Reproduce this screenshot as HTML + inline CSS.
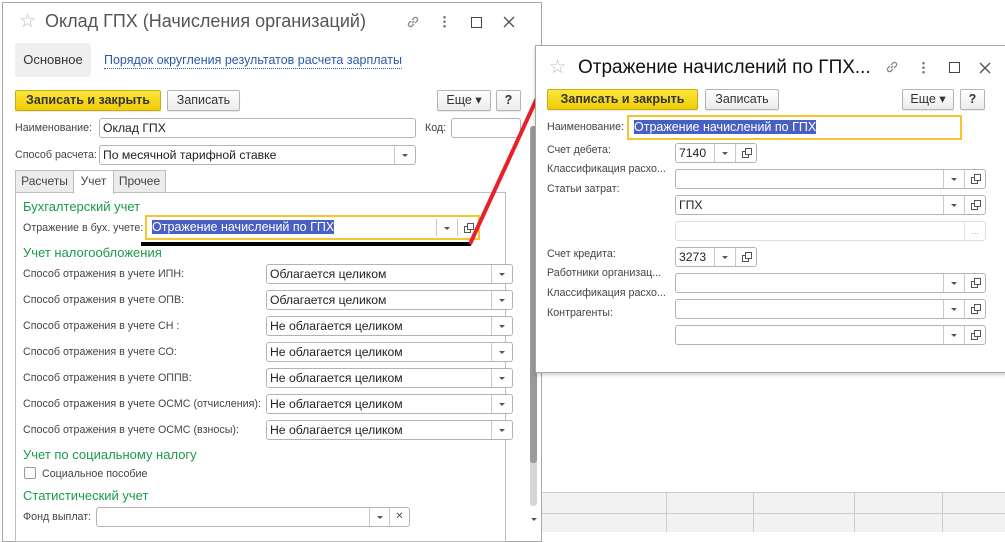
<!DOCTYPE html>
<html><head><meta charset="utf-8"><style>
*{box-sizing:border-box;margin:0;padding:0}
body{width:1005px;height:532px;overflow:hidden;background:#fff;font-family:"Liberation Sans",Arial,sans-serif;position:relative;color:#333}
.a{position:absolute}
.lbl{position:absolute;font-size:10.7px;color:#444;white-space:nowrap}
.grn{position:absolute;font-size:13px;color:#1a9a4a;white-space:nowrap}
.inp{position:absolute;border:1px solid #b3b3b3;border-radius:3px;background:#fff;height:20px;font-size:12.2px;color:#222;line-height:18px;padding-left:3px;white-space:nowrap;overflow:hidden}
.dd{position:absolute;top:0;bottom:0;width:21px;border-left:1px solid #c8c8c8}
.dd:after{content:"";position:absolute;left:7px;top:8px;border-left:3px solid transparent;border-right:3px solid transparent;border-top:3px solid #555}
.op{position:absolute;top:0;bottom:0;width:21px;border-left:1px solid #c8c8c8}
.op:before{content:"";position:absolute;left:6px;top:7px;width:5px;height:5px;border:1px solid #555;background:#fff}
.op:after{content:"";position:absolute;left:9px;top:4px;width:5px;height:5px;border:1px solid #555;background:#fff}
.btn{position:absolute;height:21px;border:1px solid #b5b5b5;border-radius:2px;background:linear-gradient(#fff,#ececec);font-size:12.5px;color:#333;text-align:center;line-height:19px;box-shadow:0 1px 1px rgba(0,0,0,.1)}
.yb{background:linear-gradient(#fbe63a,#efcd06);border-color:#c9ac12;font-weight:bold;color:#333}
.sel{background:#4a5fc4;color:#fff}
.yel{border:2px solid #f6c42c;border-radius:0}
.tab{position:absolute;top:170px;height:23px;border:1px solid #bdbdbd;border-bottom:none;background:#ececec;font-size:12px;line-height:21px;text-align:center;color:#444}
.ti{position:absolute;font-size:19px;color:#999}
</style></head><body>

<div class="a" style="left:541px;top:492px;width:464px;height:40px;background:#f2f2f2;border-top:1px solid #ccc"></div>
<div class="a" style="left:541px;top:513px;width:464px;height:1px;background:#ccc"></div>
<div class="a" style="left:666px;top:492px;width:1px;height:40px;background:#ccc"></div>
<div class="a" style="left:753px;top:492px;width:1px;height:40px;background:#ccc"></div>
<div class="a" style="left:854px;top:492px;width:1px;height:40px;background:#ccc"></div>
<div class="a" style="left:942px;top:492px;width:1px;height:40px;background:#ccc"></div>

<div class="a" style="left:2px;top:2px;width:540px;height:540px;border:1px solid #a8a8a8;background:#fff"></div>
<div class="ti" style="left:19px;top:10px;color:#bbb;font-size:19px">☆</div>
<div class="a" style="left:45px;top:11px;font-size:18px;color:#555">Оклад ГПХ (Начисления организаций)</div>
<svg class="a" style="left:405px;top:14px" width="16" height="16" viewBox="0 0 16 16" fill="none" stroke="#888" stroke-width="1.3"><path d="M7 9l2-2M6 7l-2 2a2 2 0 0 0 3 3l2-2M10 9l2-2a2 2 0 0 0-3-3L7 6"/></svg>
<div class="a" style="left:443px;top:15px;width:3px;height:13px;background:radial-gradient(circle,#777 1.2px,transparent 1.4px) 0 0/3px 4.5px"></div>
<div class="a" style="left:471px;top:17px;width:11px;height:11px;border:1.5px solid #444"></div>
<svg class="a" style="left:503px;top:16px" width="12" height="12"><path d="M1 1L11 11M11 1L1 11" stroke="#555" stroke-width="1.4"/></svg>

<div class="a" style="left:15px;top:43px;width:76px;height:34px;background:#efefef;border-radius:3px;font-size:13px;line-height:34px;text-align:center;color:#333">Основное</div>
<div class="a" style="left:104px;top:53px;font-size:12.5px;color:#2a59a8;border-bottom:1px dotted #2a59a8;line-height:15px">Порядок округления результатов расчета зарплаты</div>

<div class="btn yb" style="left:15px;top:90px;width:146px">Записать и закрыть</div>
<div class="btn" style="left:167px;top:90px;width:73px">Записать</div>
<div class="btn" style="left:437px;top:90px;width:54px">Еще ▾</div>
<div class="btn" style="left:496px;top:90px;width:25px;font-weight:bold">?</div>

<div class="lbl" style="left:15px;top:122px">Наименование:</div>
<div class="inp" style="left:99px;top:118px;width:317px">Оклад ГПХ</div>
<div class="lbl" style="left:425px;top:122px">Код:</div>
<div class="inp" style="left:451px;top:118px;width:70px"></div>
<div class="lbl" style="left:15px;top:149px">Способ расчета:</div>
<div class="inp" style="left:99px;top:145px;width:317px">По месячной тарифной ставке<div class="dd" style="right:0"></div></div>

<div class="tab" style="left:15px;width:59px">Расчеты</div>
<div class="tab" style="left:73px;width:41px;background:#fff;height:24px;z-index:2">Учет</div>
<div class="tab" style="left:113px;width:53px">Прочее</div>
<div class="a" style="left:15px;top:192px;width:491px;height:350px;border:1px solid #bdbdbd"></div>

<div class="grn" style="left:23px;top:199px">Бухгалтерский учет</div>
<div class="lbl" style="left:23px;top:222px">Отражение в бух. учете:</div>
<div class="inp yel" style="left:145px;top:215px;width:335px;height:25px;line-height:21px;padding-left:5px;font-size:12.5px"><span class="sel">Отражение начислений по ГПХ</span><div class="dd" style="right:21px;top:2px;bottom:2px"></div><div class="op" style="right:0;top:2px;bottom:2px"></div></div>
<div class="a" style="left:141px;top:242px;width:330px;height:4px;background:#000"></div>
<div class="grn" style="left:23px;top:245px">Учет налогообложения</div>

<div class="lbl" style="left:23px;top:268px">Способ отражения в учете ИПН:</div>
<div class="inp" style="left:266px;top:264px;width:247px">Облагается целиком<div class="dd" style="right:0"></div></div>
<div class="lbl" style="left:23px;top:294px">Способ отражения в учете ОПВ:</div>
<div class="inp" style="left:266px;top:290px;width:247px">Облагается целиком<div class="dd" style="right:0"></div></div>
<div class="lbl" style="left:23px;top:320px">Способ отражения в учете СН :</div>
<div class="inp" style="left:266px;top:316px;width:247px">Не облагается целиком<div class="dd" style="right:0"></div></div>
<div class="lbl" style="left:23px;top:346px">Способ отражения в учете СО:</div>
<div class="inp" style="left:266px;top:342px;width:247px">Не облагается целиком<div class="dd" style="right:0"></div></div>
<div class="lbl" style="left:23px;top:372px">Способ отражения в учете ОППВ:</div>
<div class="inp" style="left:266px;top:368px;width:247px">Не облагается целиком<div class="dd" style="right:0"></div></div>
<div class="lbl" style="left:23px;top:398px">Способ отражения в учете ОСМС (отчисления):</div>
<div class="inp" style="left:266px;top:394px;width:247px">Не облагается целиком<div class="dd" style="right:0"></div></div>
<div class="lbl" style="left:23px;top:424px">Способ отражения в учете ОСМС (взносы):</div>
<div class="inp" style="left:266px;top:420px;width:247px">Не облагается целиком<div class="dd" style="right:0"></div></div>

<div class="grn" style="left:23px;top:447px">Учет по социальному налогу</div>
<div class="a" style="left:24px;top:467px;width:12px;height:12px;border:1px solid #999;border-radius:2px"></div>
<div class="lbl" style="left:42px;top:468px">Социальное пособие</div>
<div class="grn" style="left:23px;top:488px">Статистический учет</div>
<div class="lbl" style="left:23px;top:511px">Фонд выплат:</div>
<div class="inp" style="left:96px;top:507px;width:314px"><div class="dd" style="right:20px;width:20px"></div><div class="a" style="right:0;top:0;bottom:0;width:20px;border-left:1px solid #c8c8c8;font-size:10px;color:#555;text-align:center">✕</div></div>

<div class="a" style="left:530px;top:126px;width:7px;height:380px;background:#d6d6d6;border-radius:3px"></div>
<div class="a" style="left:530px;top:126px;width:7px;height:337px;background:#9a9a9a;border-radius:3px"></div>
<div class="a" style="left:531px;top:518px;border-left:3px solid transparent;border-right:3px solid transparent;border-top:3px solid #555"></div>

<svg class="a" style="left:0;top:0" width="1005" height="532"><line x1="470" y1="244" x2="548" y2="74" stroke="#e8202a" stroke-width="4"/></svg>

<div class="a" style="left:535px;top:45px;width:475px;height:328px;border:1px solid #a8a8a8;background:#fff;box-shadow:0 2px 4px rgba(0,0,0,.2)"></div>
<div class="ti" style="left:549px;top:56px;color:#bbb;font-size:19px">☆</div>
<div class="a" style="left:578px;top:57px;font-size:19px;color:#111">Отражение начислений по ГПХ...</div>
<svg class="a" style="left:884px;top:59px" width="16" height="16" viewBox="0 0 16 16" fill="none" stroke="#888" stroke-width="1.3"><path d="M7 9l2-2M6 7l-2 2a2 2 0 0 0 3 3l2-2M10 9l2-2a2 2 0 0 0-3-3L7 6"/></svg>
<div class="a" style="left:922px;top:61px;width:3px;height:13px;background:radial-gradient(circle,#777 1.2px,transparent 1.4px) 0 0/3px 4.5px"></div>
<div class="a" style="left:949px;top:62px;width:11px;height:11px;border:1.5px solid #444"></div>
<svg class="a" style="left:979px;top:62px" width="12" height="12"><path d="M1 1L11 11M11 1L1 11" stroke="#555" stroke-width="1.4"/></svg>

<div class="btn yb" style="left:547px;top:89px;width:151px">Записать и закрыть</div>
<div class="btn" style="left:705px;top:89px;width:74px">Записать</div>
<div class="btn" style="left:902px;top:89px;width:52px">Еще ▾</div>
<div class="btn" style="left:960px;top:89px;width:25px;font-weight:bold">?</div>

<div class="lbl" style="left:547px;top:121px">Наименование:</div>
<div class="inp yel" style="left:627px;top:115px;width:335px;height:25px;line-height:21px;padding-left:5px;font-size:12.5px"><span class="sel">Отражение начислений по ГПХ</span></div>

<div class="lbl" style="left:547px;top:144px">Счет дебета:</div>
<div class="inp" style="left:675px;top:143px;width:82px">7140<div class="dd" style="right:21px"></div><div class="op" style="right:0"></div></div>
<div class="lbl" style="left:547px;top:163px">Классификация расхо...</div>
<div class="inp" style="left:675px;top:169px;width:311px"><div class="dd" style="right:21px"></div><div class="op" style="right:0"></div></div>
<div class="lbl" style="left:547px;top:183px">Статьи затрат:</div>
<div class="inp" style="left:675px;top:195px;width:311px">ГПХ<div class="dd" style="right:21px"></div><div class="op" style="right:0"></div></div>
<div class="inp" style="left:675px;top:221px;width:311px;border-color:#ddd"><div class="a" style="right:0;top:0;bottom:0;width:21px;border-left:1px solid #e4e4e4;font-size:9px;color:#aaa;text-align:center">...</div></div>
<div class="lbl" style="left:547px;top:248px">Счет кредита:</div>
<div class="inp" style="left:675px;top:247px;width:82px">3273<div class="dd" style="right:21px"></div><div class="op" style="right:0"></div></div>
<div class="lbl" style="left:547px;top:267px">Работники организац...</div>
<div class="inp" style="left:675px;top:273px;width:311px"><div class="dd" style="right:21px"></div><div class="op" style="right:0"></div></div>
<div class="lbl" style="left:547px;top:287px">Классификация расхо...</div>
<div class="inp" style="left:675px;top:299px;width:311px"><div class="dd" style="right:21px"></div><div class="op" style="right:0"></div></div>
<div class="lbl" style="left:547px;top:307px">Контрагенты:</div>
<div class="inp" style="left:675px;top:325px;width:311px"><div class="dd" style="right:21px"></div><div class="op" style="right:0"></div></div>
</body></html>
